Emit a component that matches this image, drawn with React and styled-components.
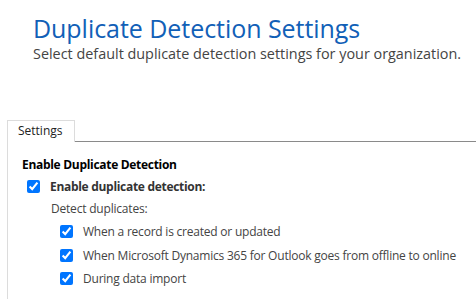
import React from "react";
import styled, { createGlobalStyle } from "styled-components";

const GlobalStyle = createGlobalStyle`
  body {
    margin: 0;
    background: #fff;
    font-family: "Segoe UI", "Open Sans", sans-serif;
  }
`;

const options = [
  "When a record is created or updated",
  "When Microsoft Dynamics 365 for Outlook goes from offline to online",
  "During data import",
];

export default function App() {
  return (
    <Page>
      <GlobalStyle />
      <Header>
        <Title>Duplicate Detection Settings</Title>
        <Subtitle>Select default duplicate detection settings for your organization.</Subtitle>
      </Header>

      <TabStrip>
        <Tab>Settings</Tab>
        <TabFiller />
      </TabStrip>

      <Panel>
        <SectionTitle>Enable Duplicate Detection</SectionTitle>
        <CheckRow indent={5}>
          <Check type="checkbox" defaultChecked />
          <MainLabel>Enable duplicate detection:</MainLabel>
        </CheckRow>
        <SubHeading>Detect duplicates:</SubHeading>
        {options.map((o) => (
          <CheckRow key={o} indent={38} spaced>
            <Check type="checkbox" defaultChecked />
            <OptionLabel>{o}</OptionLabel>
          </CheckRow>
        ))}
      </Panel>
    </Page>
  );
}

const Page = styled.div`
  width: 476px;
  height: 299px;
  overflow: hidden;
`;

const Header = styled.header`
  padding: 13px 0 0 33px;
`;

const Title = styled.h1`
  margin: 0;
  font-size: 25px;
  font-weight: 400;
  line-height: 30px;
  letter-spacing: -0.05px;
  color: #1160b7;
`;

const Subtitle = styled.p`
  margin: 1px 0 0;
  font-size: 14.4px;
  line-height: 20px;
  white-space: nowrap;
  color: #444;
`;

const TabStrip = styled.div`
  display: flex;
  margin: 56px 0 0 7px;
`;

const Tab = styled.div`
  border: 1px solid #dcdcdc;
  border-bottom: none;
  padding: 3px 11px 4px 10px;
  font-size: 12px;
  line-height: 14px;
  color: #222;
`;

const TabFiller = styled.div`
  flex: 1;
  border-bottom: 1px solid #8a8a8a;
`;

const Panel = styled.section`
  margin-left: 7px;
  border-left: 1px solid #dcdcdc;
  padding: 14px 0 20px 14px;
`;

const SectionTitle = styled.h2`
  margin: 0 0 3px;
  font-size: 12px;
  font-weight: 700;
  line-height: 18px;
  letter-spacing: -0.3px;
  color: #000;
`;

const CheckRow = styled.label`
  display: flex;
  align-items: center;
  gap: 10px;
  padding-left: ${(p) => p.indent}px;
  height: ${(p) => (p.spaced ? 23.5 : 18)}px;
`;

const Check = styled.input`
  width: 13px;
  height: 13px;
  margin: 0;
  accent-color: #0075ff;
`;

const MainLabel = styled.span`
  font-size: 12px;
  font-weight: 700;
  letter-spacing: -0.3px;
  color: #333;
`;

const SubHeading = styled.div`
  padding: 6px 0 3px 29px;
  font-size: 12px;
  line-height: 16px;
  letter-spacing: -0.2px;
  color: #444;
`;

const OptionLabel = styled.span`
  font-size: 12px;
  letter-spacing: -0.22px;
  color: #444;
`;
